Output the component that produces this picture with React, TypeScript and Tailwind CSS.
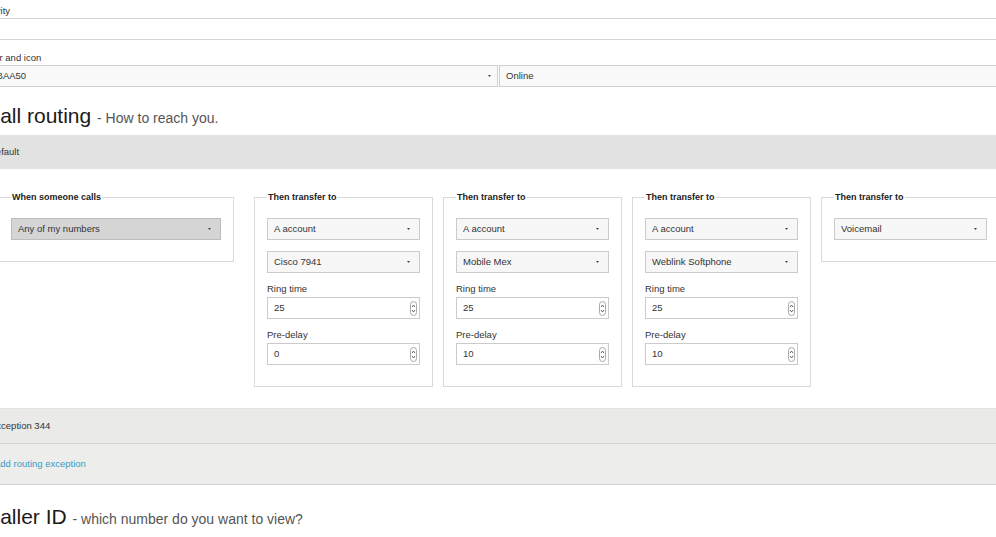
import type { ReactNode } from "react";

// Tiny down arrow used by the native-looking selects
function Caret() {
  return (
    <svg width="3" height="2" viewBox="0 0 3 2" className="shrink-0">
      <path d="M0 0h3L1.5 2z" fill="#444" />
    </svg>
  );
}

// Up / down stepper drawn like the OS number spinner
function Spinner() {
  return (
    <svg width="7" height="15" viewBox="0 0 7 15" className="shrink-0">
      <rect x="0.5" y="0.5" width="6" height="14" rx="3" fill="#fff" stroke="#a9a9a9" />
      <path d="M2 6l1.5-2L5 6" fill="none" stroke="#555" strokeWidth="0.9" />
      <path d="M2 9l1.5 2L5 9" fill="none" stroke="#555" strokeWidth="0.9" />
    </svg>
  );
}

function Select({ value, dark = false }: { value: string; dark?: boolean }) {
  return (
    <div
      className={
        dark
          ? "flex h-[22px] items-center justify-between border border-[#bcbcbc] bg-[#d5d5d5] pl-[6px] pr-[9px]"
          : "flex h-[22px] items-center justify-between border border-[#cbcbcb] bg-[#f7f7f7] pl-[6px] pr-[9px]"
      }
    >
      <span className="truncate">{value}</span>
      <Caret />
    </div>
  );
}

function NumberField({ label, value }: { label: string; value: string }) {
  return (
    <div className="mt-[10px]">
      <div className="leading-[12px]">{label}</div>
      <div className="mt-[2px] flex h-[22px] items-center justify-between border border-[#cbcbcb] bg-white pl-[6px] pr-[2px]">
        <span>{value}</span>
        <Spinner />
      </div>
    </div>
  );
}

function Group({ title, width, children }: { title: string; width: string; children: ReactNode }) {
  return (
    <fieldset className={`${width} shrink-0 border border-[#d9d9d9] px-[12px] pb-[21px] pt-[15px]`}>
      <legend className="px-[1px] text-[9px] font-bold leading-[12px] text-[#222]">{title}</legend>
      {children}
    </fieldset>
  );
}

type Hop = { account: string; device: string; ring: string; delay: string };

const hops: Hop[] = [
  { account: "A account", device: "Cisco 7941", ring: "25", delay: "0" },
  { account: "A account", device: "Mobile Mex", ring: "25", delay: "10" },
  { account: "A account", device: "Weblink Softphone", ring: "25", delay: "10" },
];

export default function App() {
  return (
    <div className="h-[537px] w-full overflow-hidden bg-white font-['Liberation_Sans',Arial,sans-serif] text-[9.5px] text-[#333]">
      <div className="-ml-[20px] w-[1037px]">
        {/* profile fields */}
        <div className="pt-[5px] leading-[12px]">Activity</div>
        <div className="mt-[1px] h-[22px] border border-[#d5d5d5] bg-white" />

        <div className="mt-[12px] leading-[12px]">Color and icon</div>
        <div className="mt-[1px] grid grid-cols-2 gap-px">
          <div className="flex h-[22px] items-center justify-between border border-[#cfcfcf] bg-[#f9f9f9] pl-[5px] pr-[6px]">
            <span>#4BAA50</span>
            <Caret />
          </div>
          <div className="flex h-[22px] items-center border border-[#cfcfcf] bg-[#f9f9f9] pl-[6px]">Online</div>
        </div>

        {/* call routing */}
        <h2 className="mt-[16px] pl-[5px] text-[21px] leading-[26px] text-[#1a1a1a]">
          Call routing <span className="text-[14px] leading-none text-[#555]">- How to reach you.</span>
        </h2>

        <div className="mt-[6px] flex h-[34px] items-center bg-[#e2e2e2] pl-[9px]">Default</div>

        <div className="mt-[22px] flex items-start">
          <div className="ml-[18px]">
            <Group title="When someone calls" width="w-[236px]">
              <Select value="Any of my numbers" dark />
            </Group>
          </div>
          <div className="ml-[20px] flex items-start gap-[10px]">
            {hops.map((h, i) => (
              <Group key={i} title="Then transfer to" width="w-[179px]">
                <Select value={h.account} />
                <div className="mt-[11px]">
                  <Select value={h.device} />
                </div>
                <NumberField label="Ring time" value={h.ring} />
                <NumberField label="Pre-delay" value={h.delay} />
              </Group>
            ))}
            <Group title="Then transfer to" width="w-[179px]">
              <Select value="Voicemail" />
            </Group>
          </div>
        </div>

        <div className="mt-[21px] flex h-[36px] items-center border-y border-t-[#e4e4e4] border-b-[#d6d6d6] bg-[#eaeae8] pl-[10px]">
          Exception 344
        </div>
        <div className="flex h-[41px] items-center border-b border-[#d2d2d2] bg-[#ededeb] pl-[14px] text-[#3a9cc6]">
          Add routing exception
        </div>

        {/* caller id */}
        <h2 className="mt-[19px] pl-[5px] text-[21px] leading-[26px] text-[#1a1a1a]">
          Caller ID <span className="text-[14px] leading-none text-[#555]">- which number do you want to view?</span>
        </h2>
      </div>
    </div>
  );
}
